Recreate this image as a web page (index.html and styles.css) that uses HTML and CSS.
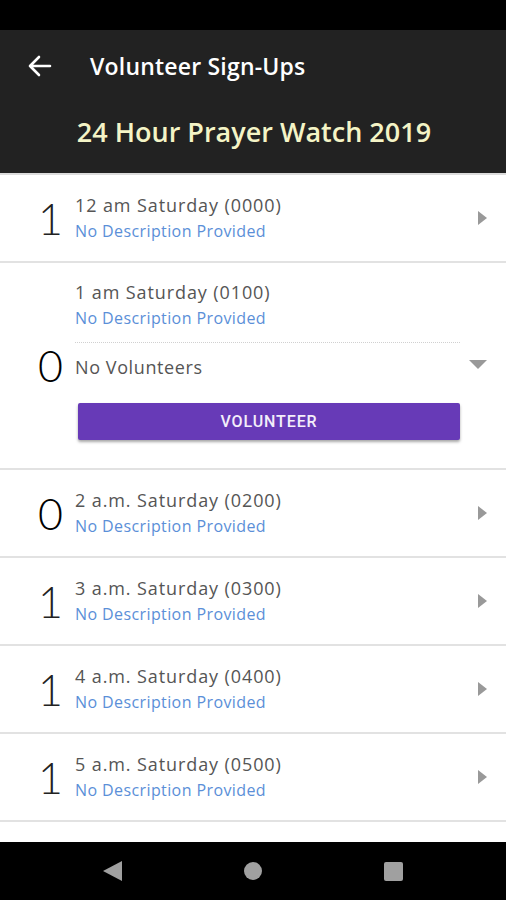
FILE: index.html
```html
<!DOCTYPE html>
<html lang="en">
<head>
    <meta charset="UTF-8">
    <meta name="viewport" content="width=device-width, initial-scale=1.0">
    <title>Volunteer Sign-Ups</title>
    <link rel="stylesheet" href="styles.css">
</head>
<body>
    <div class="screen">
        <div class="status-bar"></div>

        <header class="app-bar">
            <div class="toolbar">
                <svg class="back" width="26" height="22" viewBox="0 0 26 22">
                    <path d="M3 11H23 M12 2L3 11L12 20" fill="none" stroke="#fff" stroke-width="2.6" stroke-linecap="round" stroke-linejoin="round"/>
                </svg>
                <div class="toolbar-title">Volunteer Sign-Ups</div>
            </div>
            <div class="event-title">24 Hour Prayer Watch 2019</div>
        </header>

        <div class="slot-list">
            <div class="slot">
                <div class="count">1</div>
                <div class="slot-body">
                    <div class="slot-title">12 am Saturday (0000)</div>
                    <div class="slot-desc">No Description Provided</div>
                </div>
                <div class="chevron"><span class="tri-right"></span></div>
            </div>

            <!-- expanded slot -->
            <div class="slot open">
                <div class="count dark">0</div>
                <div class="slot-body">
                    <div class="slot-title">1 am Saturday (0100)</div>
                    <div class="slot-desc">No Description Provided</div>
                    <div class="dots"></div>
                    <div class="volunteers">
                        <span>No Volunteers</span>
                        <span class="tri-down"></span>
                    </div>
                    <button class="volunteer-btn">VOLUNTEER</button>
                </div>
            </div>

            <div class="slot">
                <div class="count dark">0</div>
                <div class="slot-body">
                    <div class="slot-title">2 a.m. Saturday (0200)</div>
                    <div class="slot-desc">No Description Provided</div>
                </div>
                <div class="chevron"><span class="tri-right"></span></div>
            </div>

            <div class="slot">
                <div class="count">1</div>
                <div class="slot-body">
                    <div class="slot-title">3 a.m. Saturday (0300)</div>
                    <div class="slot-desc">No Description Provided</div>
                </div>
                <div class="chevron"><span class="tri-right"></span></div>
            </div>

            <div class="slot">
                <div class="count">1</div>
                <div class="slot-body">
                    <div class="slot-title">4 a.m. Saturday (0400)</div>
                    <div class="slot-desc">No Description Provided</div>
                </div>
                <div class="chevron"><span class="tri-right"></span></div>
            </div>

            <div class="slot">
                <div class="count">1</div>
                <div class="slot-body">
                    <div class="slot-title">5 a.m. Saturday (0500)</div>
                    <div class="slot-desc">No Description Provided</div>
                </div>
                <div class="chevron"><span class="tri-right"></span></div>
            </div>

            <!-- next slot, scrolled under the nav bar -->
            <div class="slot"></div>
        </div>

        <nav class="nav-bar">
            <span class="nav-back"></span>
            <span class="nav-home"></span>
            <span class="nav-recent"></span>
        </nav>
    </div>
</body>
</html>
```

FILE: styles.css
```css
body {
    margin: 0;
    font-family: 'Open Sans', 'Lato', sans-serif;
    background: #fff;
}
.screen {
    width: 506px;
    height: 900px;
    display: flex;
    flex-direction: column;
    overflow: hidden;
}
.status-bar {
    height: 30px;
    background: #000;
    flex-shrink: 0;
}
.app-bar {
    background: #222;
    height: 143px;
    border-bottom: 2px solid #dcdcdc;
    flex-shrink: 0;
}
.toolbar {
    height: 72px;
    display: flex;
    align-items: center;
    padding-left: 27px;
}
.back {
    display: block;
}
.toolbar-title {
    margin-left: 37px;
    color: #fff;
    font-size: 23px;
    font-weight: 600;
    letter-spacing: 0.2px;
}
.event-title {
    text-align: center;
    color: #f4f4c6;
    font-size: 27px;
    font-weight: 600;
    padding-top: 11px;
    padding-left: 2px;
}
.slot-list {
    flex: 1;
    overflow: hidden;
}
.slot {
    display: flex;
    align-items: center;
    height: 86px;
    border-bottom: 2px solid #e2e2e2;
}
.slot.open {
    height: 205px;
}
.count {
    width: 63px;
    padding-right: 11px;
    text-align: right;
    font-family: 'Lato', sans-serif;
    font-size: 43px;
    font-weight: 300;
    color: #222;
    flex-shrink: 0;
    line-height: 1;
}
.count.dark {
    color: #000;
}
.slot-body {
    flex: 1;
    padding-left: 1px;
}
.open .slot-body {
    align-self: flex-start;
    padding-top: 16px;
    padding-right: 19px;
}
.slot-title {
    font-size: 18px;
    line-height: 26px;
    letter-spacing: 0.9px;
    color: #555;
}
.slot-desc {
    font-size: 16px;
    line-height: 26px;
    letter-spacing: 0.4px;
    color: #5b8fd8;
}
.chevron {
    width: 38px;
    padding-right: 19px;
    display: flex;
    justify-content: flex-end;
}
.tri-right {
    width: 0;
    height: 0;
    border-top: 7px solid transparent;
    border-bottom: 7px solid transparent;
    border-left: 9px solid #999;
}
.dots {
    margin-top: 11px;
    margin-right: 27px;
    border-top: 1px dotted #d0d0d0;
}
.volunteers {
    margin-top: 11px;
    height: 26px;
    display: flex;
    align-items: center;
    justify-content: space-between;
    font-size: 18px;
    letter-spacing: 0.6px;
    color: #555;
}
.tri-down {
    width: 0;
    height: 0;
    border-left: 9px solid transparent;
    border-right: 9px solid transparent;
    border-top: 9px solid #999;
    margin-top: -6px;
}
.volunteer-btn {
    display: block;
    margin: 23px 27px 0 3px;
    width: calc(100% - 30px);
    height: 37px;
    border: none;
    border-radius: 2px;
    background: #673ab7;
    color: #f3eefa;
    font-family: 'Roboto', sans-serif;
    font-weight: 500;
    font-size: 16px;
    letter-spacing: 0.9px;
    box-shadow: 0 2px 3px rgba(0,0,0,0.35);
}
.nav-bar {
    height: 58px;
    background: #000;
    flex-shrink: 0;
    display: flex;
    align-items: center;
    justify-content: space-between;
    padding: 0 103px 0 103px;
}
.nav-back {
    width: 0;
    height: 0;
    border-top: 10px solid transparent;
    border-bottom: 10px solid transparent;
    border-right: 19px solid #a0a0a0;
}
.nav-home {
    width: 18px;
    height: 18px;
    border-radius: 50%;
    background: #a0a0a0;
}
.nav-recent {
    width: 19px;
    height: 19px;
    border-radius: 2px;
    background: #a0a0a0;
}
```
